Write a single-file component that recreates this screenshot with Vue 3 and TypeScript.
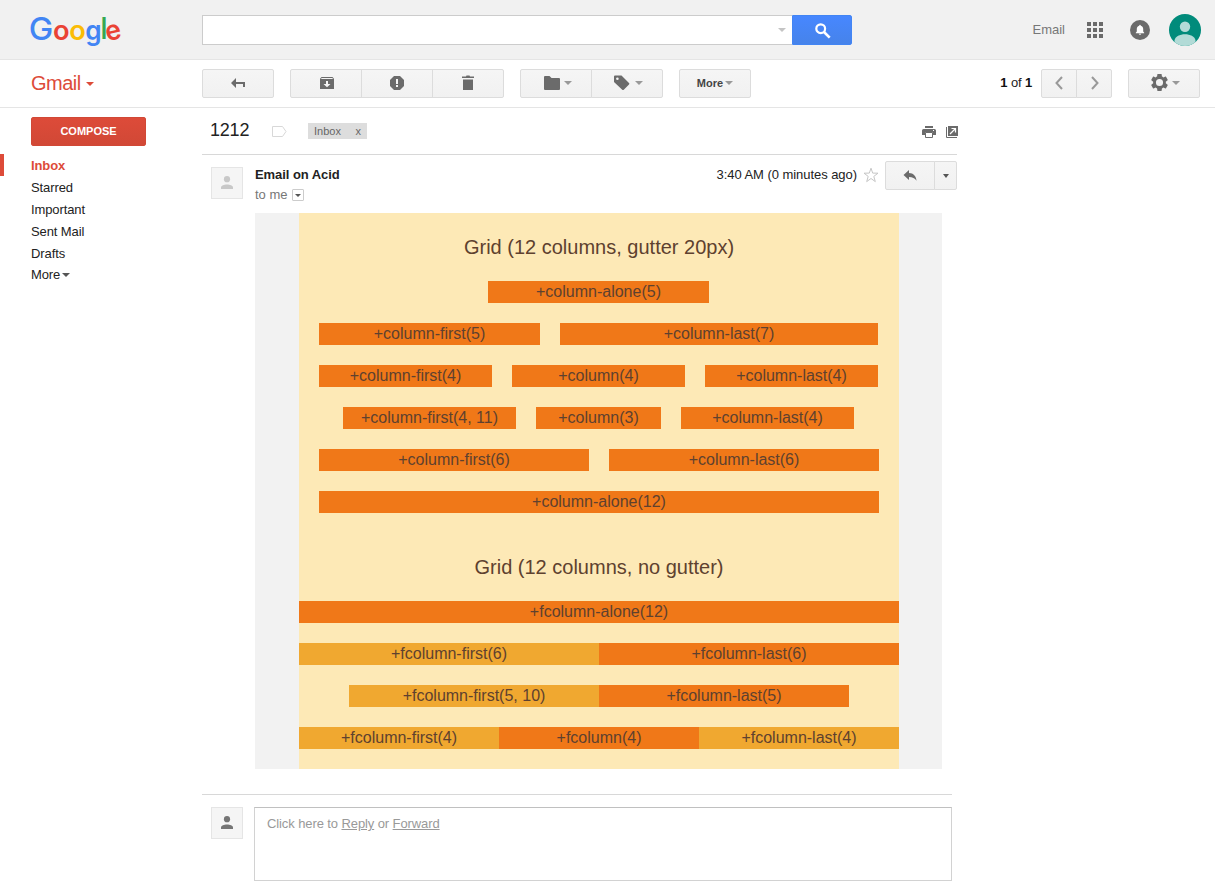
<script setup lang="ts">
interface Cell { label: string; width: number; tone?: 'light' }
interface Row { offset: number; cells: Cell[] }

const folders: string[] = ['Starred', 'Important', 'Sent Mail', 'Drafts']

const gutterRows: Row[] = [
  { offset: 189, cells: [{ label: '+column-alone(5)', width: 221 }] },
  { offset: 20, cells: [{ label: '+column-first(5)', width: 221 }, { label: '+column-last(7)', width: 318 }] },
  { offset: 20, cells: [{ label: '+column-first(4)', width: 173 }, { label: '+column(4)', width: 173 }, { label: '+column-last(4)', width: 173 }] },
  { offset: 44, cells: [{ label: '+column-first(4, 11)', width: 173 }, { label: '+column(3)', width: 125 }, { label: '+column-last(4)', width: 173 }] },
  { offset: 20, cells: [{ label: '+column-first(6)', width: 270 }, { label: '+column-last(6)', width: 270 }] },
  { offset: 20, cells: [{ label: '+column-alone(12)', width: 560 }] },
]

const flushRows: Row[] = [
  { offset: 0, cells: [{ label: '+fcolumn-alone(12)', width: 600 }] },
  { offset: 0, cells: [{ label: '+fcolumn-first(6)', width: 300, tone: 'light' }, { label: '+fcolumn-last(6)', width: 300 }] },
  { offset: 50, cells: [{ label: '+fcolumn-first(5, 10)', width: 250, tone: 'light' }, { label: '+fcolumn-last(5)', width: 250 }] },
  { offset: 0, cells: [{ label: '+fcolumn-first(4)', width: 200, tone: 'light' }, { label: '+fcolumn(4)', width: 200 }, { label: '+fcolumn-last(4)', width: 200, tone: 'light' }] },
]
</script>

<template>
  <div class="page">
    <header class="topbar">
      <svg class="logo" width="94" height="34" viewBox="0 0 94 34" role="img" aria-label="Google">
        <text class="lg blue" transform="translate(-1.300 25.500) scale(1.040 1)">G</text>
        <text class="sm red" transform="translate(23 25.500) scale(.990 1)">o</text>
        <text class="sm yellow" transform="translate(39.200 25.500) scale(.990 1)">o</text>
        <text class="sm blue" transform="translate(55.300 25.500) scale(.950 1)">g</text>
        <text class="sm green" transform="translate(70.700 25.300) scale(.900 1.060)">l</text>
        <text class="sm red" transform="translate(77.300 27.200) rotate(-13) scale(.970 1)">e</text>
      </svg>
      <div class="search">
        <div class="search-field"><i class="caret pale"></i></div>
        <button class="search-btn">
          <svg width="16" height="16" viewBox="0 0 16 16"><circle cx="5.700" cy="5.700" r="4.400" fill="none" stroke="#fff" stroke-width="2.200" /><path d="M9 9 14.700 14.700" stroke="#fff" stroke-width="2.600" /></svg>
        </button>
      </div>
      <div class="account">
        <span class="email">Email</span>
        <svg class="apps" width="16" height="16" viewBox="0 0 16 16" fill="#6b6b6b"><path d="M0 0h4v4H0zM6 0h4v4H6zM12 0h4v4h-4zM0 6h4v4H0zM6 6h4v4H6zM12 6h4v4h-4zM0 12h4v4H0zM6 12h4v4H6zM12 12h4v4h-4z" /></svg>
        <svg class="bell" width="20" height="20" viewBox="0 0 20 20"><circle cx="10" cy="10" r="10" fill="#6b6b6b" /><path d="M9.200 5.800c0-1.400 1.600-1.400 1.600 0 1.700.5 2.400 1.700 2.400 3.300v2.300l1 1.300v.5H5.800v-.5l1-1.300V9.100c0-1.600.7-2.800 2.400-3.300zM8.800 13.800h2.400c-.2 1.300-2.200 1.300-2.400 0z" fill="#fff" /></svg>
        <svg class="face" width="32" height="32" viewBox="0 0 32 32"><defs><clipPath id="disc"><circle cx="16" cy="16" r="16" /></clipPath></defs><g clip-path="url(#disc)"><path d="M0 0h32v32H0z" fill="#018b7b" /><circle cx="16" cy="12.700" r="5.200" fill="#b2dbd7" /><path d="M5.500 32v-5.500C6 22.500 11 20.300 16 20.300s10 2.200 10.500 6.200V32z" fill="#b2dbd7" /></g></svg>
      </div>
    </header>

    <nav class="toolbar">
      <div class="brand"><span>Gmail</span><i class="caret red-caret"></i></div>
      <div class="group">
        <button class="btn w72"><svg class="back" width="14" height="10" viewBox="0 0 14 10"><path d="M0 5 5 0v4h9v5h-2V6H5v4z" fill="#6b6b6b" /></svg></button>
      </div>
      <div class="group">
        <button class="btn w72">
          <svg class="archive" width="14" height="12" viewBox="0 0 14 12"><path d="M1.500 0h11L14 1.800V12H0V1.800z" fill="#6b6b6b" /><path d="M1.300 1.500h11.400" stroke="#f3f3f3" stroke-width="1" /><path d="M6 4h2v3h2.500L7 10.200 3.500 7H6z" fill="#f5f5f5" /></svg>
        </button>
        <button class="btn w72">
          <svg class="spam" width="14" height="14" viewBox="0 0 14 14"><path d="M4 0h6l4 4v6l-4 4H4l-4-4V4z" fill="#6b6b6b" /><path d="M6 3h2v5H6zM6 9h2v2H6z" fill="#f5f5f5" /></svg>
        </button>
        <button class="btn w72">
          <svg class="trash" width="12" height="16" viewBox="0 0 12 16"><path d="M0 1.500h4L4.500.500h3l.5 1h4V3H0zM1 4.500h10V15H1z" fill="#6b6b6b" /></svg>
        </button>
      </div>
      <div class="group">
        <button class="btn w72">
          <svg class="folder" width="16" height="14" viewBox="0 0 16 14"><path d="M0 1Q0 0 1 0h4.500L7.500 2H15q1 0 1 1v10q0 1-1 1H1q-1 0-1-1z" fill="#6b6b6b" /></svg><i class="caret mid folder-caret"></i>
        </button>
        <button class="btn w72">
          <svg class="tag" width="16" height="16" viewBox="0 0 16 16"><path d="M0 1.500Q0 .500 1 .500h6.500L15 8q.8.800 0 1.600l-5 5q-1 1-2 0L0 7z" fill="#6b6b6b" /><circle cx="3.400" cy="3.700" r="1.300" fill="#f4f4f4" /></svg><i class="caret mid folder-caret"></i>
        </button>
      </div>
      <div class="group">
        <button class="btn w72 more">More<i class="caret mid"></i></button>
      </div>
      <div class="pager"><b>1</b> of <b>1</b></div>
      <div class="group nav">
        <button class="btn w36"><svg width="8" height="14" viewBox="0 0 8 14"><path d="M7 1 1.500 7 7 13" fill="none" stroke="#999" stroke-width="2" /></svg></button>
        <button class="btn w36"><svg class="next" width="8" height="14" viewBox="0 0 8 14"><path d="M1 1 6.500 7 1 13" fill="none" stroke="#999" stroke-width="2" /></svg></button>
      </div>
      <div class="group settings">
        <button class="btn w72">
          <svg class="gear" width="17" height="17" viewBox="2 2 20 20"><path fill="#6b6b6b" d="M19.430 12.980c.040-.320.070-.640.070-.980s-.030-.660-.070-.980l2.110-1.650c.190-.150.240-.420.120-.640l-2-3.460c-.120-.220-.390-.300-.610-.220l-2.490 1c-.520-.400-1.080-.730-1.690-.980l-.380-2.650C14.460 2.180 14.250 2 14 2h-4c-.250 0-.460.180-.490.420l-.380 2.650c-.610.250-1.170.590-1.690.980l-2.490-1c-.230-.090-.490 0-.610.220l-2 3.460c-.130.220-.070.490.120.640l2.110 1.650c-.040.320-.070.650-.070.980s.030.660.070.980l-2.110 1.650c-.190.150-.240.420-.120.640l2 3.460c.120.220.390.300.610.220l2.490-1c.520.400 1.080.730 1.690.980l.380 2.650c.030.240.240.420.490.420h4c.250 0 .460-.180.490-.420l.380-2.650c.610-.250 1.170-.590 1.690-.980l2.490 1c.230.090.490 0 .610-.220l2-3.460c.120-.220.070-.490-.120-.640zM12 16.200a4.200 4.200 0 1 1 0-8.400 4.200 4.200 0 0 1 0 8.400z" /></svg><i class="caret mid gear-caret"></i>
        </button>
      </div>
    </nav>

    <div class="body">
      <aside class="sidebar">
        <button class="compose">COMPOSE</button>
        <ul class="folders">
          <li class="active">Inbox</li>
          <li v-for="f in folders" :key="f">{{ f }}</li>
          <li class="last">More<i class="caret"></i></li>
        </ul>
      </aside>

      <main class="thread">
        <div class="subject">
          <h1>1212</h1>
          <svg class="outline-tag" width="15" height="11" viewBox="0 0 15 11"><path d="M.500.500h10l3.500 5-3.500 5H.500z" fill="none" stroke="#d8d8d8" /></svg>
          <span class="chip"><span>Inbox</span><span>x</span></span>
          <span class="tools">
            <svg width="14" height="12" viewBox="0 0 14 12"><path d="M3 0h8v2H3zM1.500 3h11Q14 3 14 4.500V9h-3V6.500H3V9H0V4.500Q0 3 1.500 3z" fill="#6b6b6b" /><path d="M3.500 6.500h7v5h-7z" fill="#fff" stroke="#6b6b6b" /><path d="M11 4h1v1h-1z" fill="#fff" /></svg>
            <svg width="12" height="12" viewBox="0 0 12 12"><path d="M2 0h10v10H2z" fill="#6b6b6b" /><path d="M.500 1v10.500H11" fill="none" stroke="#6b6b6b" /><path d="M5.500 2.500h4v4M9.500 2.500 4 8" fill="none" stroke="#fff" stroke-width="1.200" /></svg>
          </span>
        </div>

        <section class="message">
          <div class="meta">
            <span class="avatar"><svg width="12" height="13" viewBox="0 0 12 13" fill="#c8c8c8"><circle cx="6" cy="3.200" r="3.100" /><path d="M0 13v-1.500C0 9.500 3 8.500 6 8.500s6 1 6 3V13z" /></svg></span>
            <div class="who">
              <div class="from">Email on Acid</div>
              <div class="to">to me<span class="details"><i class="caret"></i></span></div>
            </div>
            <span class="time">3:40 AM (0 minutes ago)</span>
            <svg class="star" width="16" height="16" viewBox="0 0 16 16"><path d="M8 1.200 9.700 6.100 15 6.200 10.800 9.400 12.300 14.600 8 11.500 3.700 14.600 5.200 9.400 1 6.200 6.300 6.100z" fill="#fff" stroke="#c6c6c6" /></svg>
            <div class="group reply">
              <button class="btn w50"><svg width="14" height="11" viewBox="0 0 14 11"><path d="M6 0v3.100C10.500 3.300 13 6 13.500 10.800 11.800 8.200 9.500 7.200 6 7.100V10L.500 5z" fill="#6b6b6b" /></svg></button>
              <button class="btn w23"><i class="caret narrow"></i></button>
            </div>
          </div>

          <div class="canvas">
            <div class="sheet">
              <h2>Grid (12 columns, gutter 20px)</h2>
              <div v-for="(row, i) in gutterRows" :key="'g' + i" class="row gutter" :style="{ paddingLeft: row.offset + 'px' }">
                <div v-for="c in row.cells" :key="c.label" class="cell" :style="{ width: c.width + 'px' }">{{ c.label }}</div>
              </div>
              <h2 class="second">Grid (12 columns, no gutter)</h2>
              <div v-for="(row, i) in flushRows" :key="'f' + i" class="row" :style="{ paddingLeft: row.offset + 'px' }">
                <div v-for="c in row.cells" :key="c.label" class="cell" :class="c.tone" :style="{ width: c.width + 'px' }">{{ c.label }}</div>
              </div>
            </div>
          </div>
        </section>

        <section class="respond">
          <span class="avatar"><svg width="12" height="13" viewBox="0 0 12 13" fill="#757575"><circle cx="6" cy="3.200" r="3.100" /><path d="M0 13v-1.500C0 9.500 3 8.500 6 8.500s6 1 6 3V13z" /></svg></span>
          <div class="reply-box">Click here to <u>Reply</u> or <u>Forward</u></div>
        </section>
      </main>
    </div>
  </div>
</template>

<style>
body { background: #fff; overflow: hidden; }
</style>

<style scoped>
* { box-sizing: border-box; }
.page { width: 1215px; height: 886px; overflow: hidden; font-family: "Liberation Sans", Arial, sans-serif; font-size: 13px; color: #222; background: #fff; }
button { font-family: inherit; padding: 0; margin: 0; }
svg { display: block; flex: none; }
.caret { display: inline-block; flex: none; width: 0; height: 0; border: solid transparent; border-width: 4px 4px 0; border-top-color: #555; }
.pale { border-top-color: #c4c4c4; }
.mid { border-top-color: #999; }
.narrow { border-width: 4px 3.500px 0; }
.red-caret { border-width: 4px 4px 0; border-top-color: #dd4b39; margin: 1px 0 0 5px; }

.topbar { display: flex; align-items: center; height: 60px; padding: 0 14px 0 30px; background: #f1f1f1; border-bottom: 1px solid #e5e5e5; }
.logo { margin-top: 2px; overflow: visible; }
.logo text { font-family: Inter, sans-serif; font-size: 27.500px; font-weight: 600; }
.logo .lg { font-size: 31.500px; font-weight: 500; }
.blue { fill: #4285f4; } .red { fill: #ea4335; } .yellow { fill: #fbbc05; } .green { fill: #34a853; }
.search { display: flex; margin-left: 78px; width: 650px; height: 30px; margin-top: 1px; }
.search-field { flex: 1; display: flex; align-items: center; justify-content: flex-end; padding-right: 6px; background: #fff; border: 1px solid #ccc; border-right: 0; }
.search-btn { display: flex; align-items: center; justify-content: center; width: 60px; border: 1px solid #4285f4; border-radius: 0 2px 2px 0; background: linear-gradient(#4787ff, #4683ea); }
.search-btn svg { margin: 1px 0 0 1px; }
.account { display: flex; align-items: center; margin-left: auto; margin-top: 1px; }
.email { color: #777; margin-top: -1px; }
.apps { margin-left: 22px; } .bell { margin-left: 27px; } .face { margin-left: 19px; }

.toolbar { display: flex; align-items: center; height: 48px; padding-left: 31px; border-bottom: 1px solid #e5e5e5; }
.brand { display: flex; align-items: center; width: 171px; font-size: 20px; letter-spacing: -.5px; color: #dd4b39; }
.group { display: flex; margin-right: 16px; }
.btn { display: flex; align-items: center; justify-content: center; height: 29px; border: 1px solid #dcdcdc; background: linear-gradient(#f5f5f5, #f1f1f1); }
.btn + .btn { margin-left: -1px; }
.btn:first-child { border-radius: 2px 0 0 2px; }
.btn:last-child { border-radius: 0 2px 2px 0; }
.btn:only-child { border-radius: 2px; }
.w72 { width: 72px; } .w36 { width: 36px; } .w50 { width: 50px; } .w23 { width: 23px; }
.back { margin: 0 1px 1px 0; }
.archive { margin-left: 2px; margin-bottom: 1px; }
.spam { margin-bottom: 1px; }
.trash { margin-bottom: 2px; }
.folder { margin-left: 4px; margin-bottom: 1px; }
.folder-caret { margin-left: 4px; margin-bottom: 1px; }
.tag { margin-left: 3px; margin-bottom: 2px; }
.tag + .folder-caret { margin-left: 5px; }
.gear { margin-left: 3px; margin-bottom: 2px; }
.gear-caret { margin-left: 4px; margin-bottom: 1px; }
.more { font-size: 11px; font-weight: bold; color: #444; padding-bottom: 1px; }
.more .caret { margin: 0 0 0 2px; }
.pager { margin-left: auto; margin-right: 9px; letter-spacing: -.15px; color: #222; white-space: pre; margin-top: -2px; }
.pager b { color: #111; }
.nav { margin-right: 16px; }
.nav svg { margin-bottom: 1px; }
.next { margin-left: 2px; }
.settings { margin-right: 15px; }

.body { display: flex; }
.sidebar { width: 202px; padding-top: 9px; }
.compose { display: block; width: 115px; height: 29px; margin-left: 31px; border: 1px solid #d14836; border-radius: 2px; background: linear-gradient(#dd4b39, #d14836); color: #fff; font-size: 11px; font-weight: bold; padding-bottom: 1px; }
.folders { list-style: none; margin: 8px 0 0; padding: 0; }
.folders li { height: 22px; line-height: 23px; padding-left: 31px; letter-spacing: -.1px; color: #222; }
.folders .active { border-left: 4px solid #dd4b39; padding-left: 27px; color: #dd4b39; font-weight: bold; }
.folders .last { display: flex; align-items: center; line-height: 20px; height: 21px; }
.last .caret { margin-left: 2px; }

.thread { width: 755px; }
.subject { display: flex; align-items: center; height: 47px; padding-left: 8px; border-bottom: 1px solid #d8d8d8; }
.subject h1 { margin: -2px 0 0; width: 62px; font-size: 18px; font-weight: normal; line-height: 20px; letter-spacing: -.2px; color: #222; }
.chip { display: flex; justify-content: space-between; width: 59px; height: 16px; margin-left: 21px; padding: 0 6px; background: #ddd; color: #666; font-size: 11px; line-height: 16px; }
.tools { display: flex; align-items: center; gap: 10px; margin: 2px -1px 0 auto; }
.meta { display: flex; height: 58px; padding-left: 9px; }
.avatar { display: flex; align-items: center; justify-content: center; flex: none; width: 32px; height: 32px; background: #f5f5f5; border: 1px solid #e5e5e5; }
.avatar svg { margin-top: -1px; }
.meta .avatar { margin-top: 12px; }
.who { flex: 1; padding: 12px 0 0 12px; }
.from { font-weight: bold; line-height: 16px; letter-spacing: -.07px; color: #222; }
.to { display: flex; align-items: center; margin-top: 3px; line-height: 18px; color: #777; }
.details { display: flex; align-items: center; justify-content: center; width: 12px; height: 12px; margin: 0 0 0 4px; border: 1px solid #ccc; border-radius: 1px; }
.details .caret { border-width: 3px 3px 0; }
.time { padding-top: 12px; line-height: 16px; letter-spacing: -.05px; color: #222; }
.star { margin: 12px 6px 0; }
.reply { margin: 6px 0 0; }

.canvas { width: 687px; height: 556px; margin-left: 53px; padding-left: 44px; background: #f2f2f2; }
.sheet { width: 600px; height: 556px; padding-top: 20px; background: #fde9b6; color: #5e412f; }
.sheet h2 { margin: 0 0 20px; height: 28px; line-height: 28px; font-size: 20px; font-weight: normal; text-align: center; }
.sheet .second { margin-top: 40px; }
.row { display: flex; height: 22px; margin-bottom: 20px; }
.gutter { gap: 20px; }
.cell { height: 22px; line-height: 22px; font-size: 16px; text-align: center; background: #f07818; white-space: nowrap; }
.light { background: #f0a830; }

.respond { display: flex; width: 750px; margin-top: 25px; padding: 12px 0 0 9px; border-top: 1px solid #d8d8d8; }
.reply-box { flex: 1; height: 74px; margin-left: 11px; padding: 8px 12px; border: 1px solid #d2d2d2; border-top-color: #c0c0c0; line-height: 15px; letter-spacing: -.1px; color: #999; }
</style>
